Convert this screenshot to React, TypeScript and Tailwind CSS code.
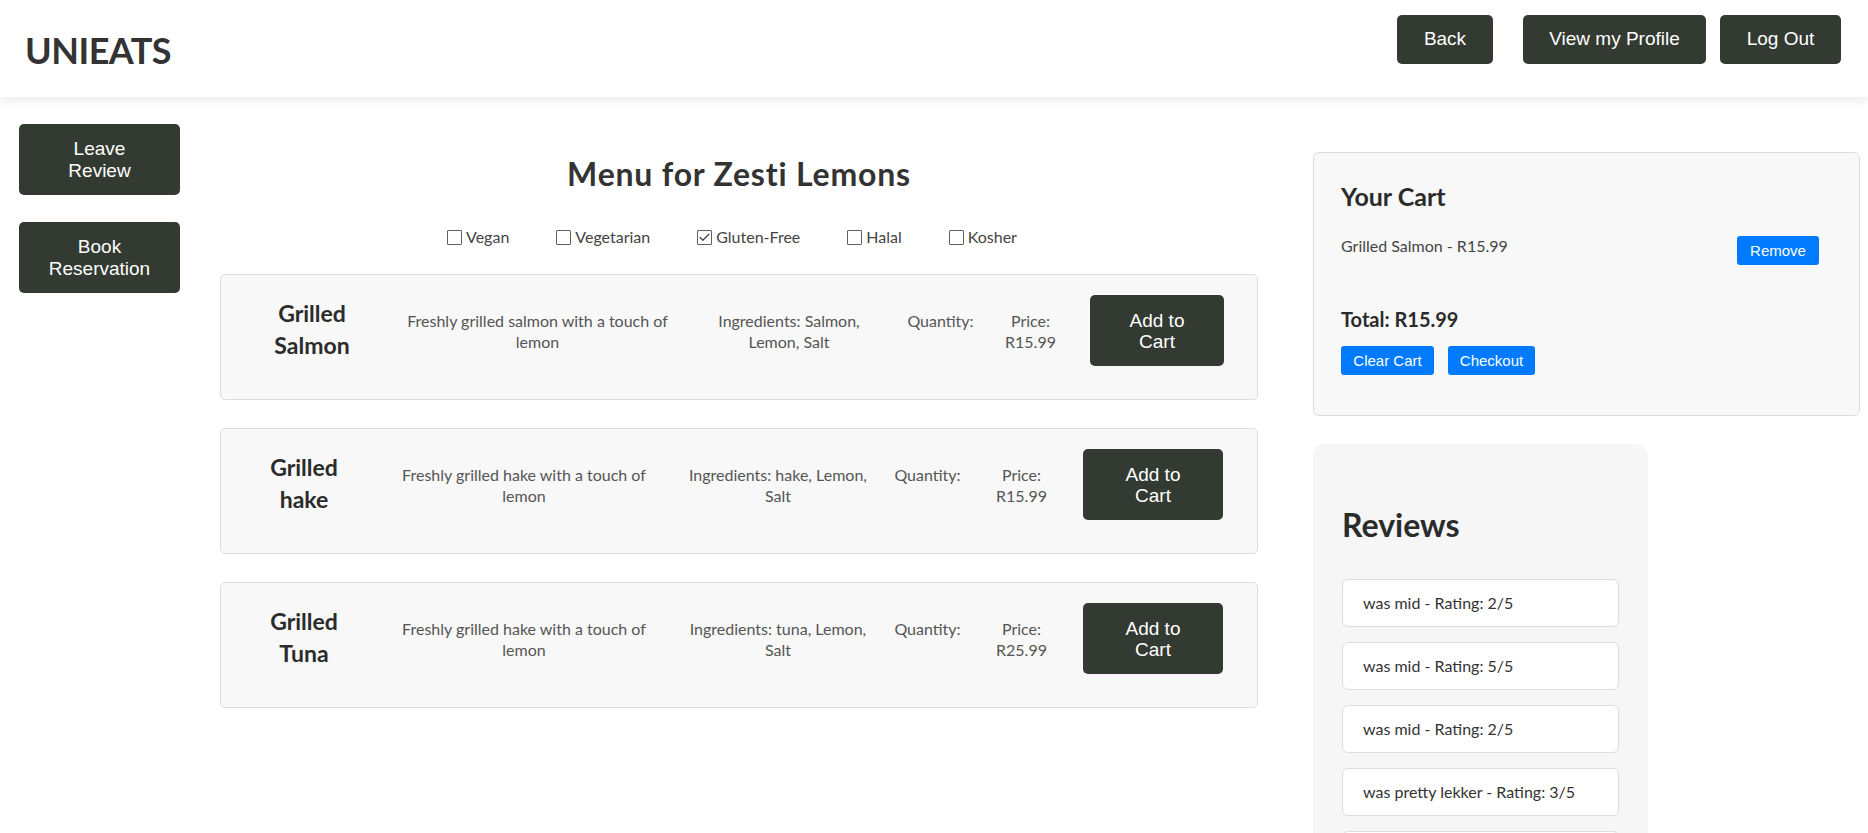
import { Check } from 'lucide-react';

type Dish = {
  title: string[];
  desc: string[];
  ingredients: string[];
  price: string;
  cols: string;
  btnWidth: string;
};

const dishes: Dish[] = [
  {
    title: ['Grilled', 'Salmon'],
    desc: ['Freshly grilled salmon with a touch of', 'lemon'],
    ingredients: ['Ingredients: Salmon,', 'Lemon, Salt'],
    price: 'R15.99',
    cols: 'grid-cols-[132px_319px_184px_119px_61px_163px]',
    btnWidth: 'w-[134px]',
  },
  {
    title: ['Grilled', 'hake'],
    desc: ['Freshly grilled hake with a touch of', 'lemon'],
    ingredients: ['Ingredients: hake, Lemon,', 'Salt'],
    price: 'R15.99',
    cols: 'grid-cols-[116px_324px_184px_115px_73px_165px]',
    btnWidth: 'w-[140px]',
  },
  {
    title: ['Grilled', 'Tuna'],
    desc: ['Freshly grilled hake with a touch of', 'lemon'],
    ingredients: ['Ingredients: tuna, Lemon,', 'Salt'],
    price: 'R25.99',
    cols: 'grid-cols-[116px_324px_184px_115px_73px_165px]',
    btnWidth: 'w-[140px]',
  },
];

const filters = [
  { label: 'Vegan', checked: false },
  { label: 'Vegetarian', checked: false },
  { label: 'Gluten-Free', checked: true },
  { label: 'Halal', checked: false },
  { label: 'Kosher', checked: false },
];

const reviews = [
  'was mid - Rating: 2/5',
  'was mid - Rating: 5/5',
  'was mid - Rating: 2/5',
  'was pretty lekker - Rating: 3/5',
  'was mid - Rating: 4/5',
  'was mid - Rating: 3/5',
];

const darkBtn =
  "bg-[#333a32] text-white rounded-[5px] font-['Liberation_Sans',Arial,sans-serif] text-[19px]";
const blueBtn =
  "bg-[#007bff] text-white rounded-[3px] font-['Liberation_Sans',Arial,sans-serif] text-[15px] h-[29px] leading-[29px]";

function Lines({ lines }: { lines: string[] }) {
  return (
    <div className="flex flex-col items-center text-center whitespace-nowrap">
      {lines.map((l, i) => (
        <span key={i}>{l}</span>
      ))}
    </div>
  );
}

function DishCard({ dish }: { dish: Dish }) {
  return (
    <div className="border border-[#dddddd] rounded-[5px] bg-[#f8f8f8] pt-[20px] pb-[33px] pl-[25px]">
      <div className={`grid ${dish.cols} items-center`}>
        <div className="flex flex-col items-center text-[23px] leading-[32px] font-bold text-[#2b2b2b] -mt-[4px]">
          {dish.title.map((t, i) => (
            <span key={i}>{t}</span>
          ))}
        </div>
        <div className="text-[16px] leading-[21px] text-[#555]">
          <Lines lines={dish.desc} />
        </div>
        <div className="text-[16px] leading-[21px] text-[#555]">
          <Lines lines={dish.ingredients} />
        </div>
        <div className="text-[16px] leading-[21px] text-[#555]">
          <Lines lines={['Quantity:', '\u00a0']} />
        </div>
        <div className="text-[16px] leading-[21px] text-[#555]">
          <Lines lines={['Price:', dish.price]} />
        </div>
        <div className="flex justify-end">
          <button className={`${darkBtn} ${dish.btnWidth} h-[71px] leading-[21px]`}>
            Add to
            <br />
            Cart
          </button>
        </div>
      </div>
    </div>
  );
}

export default function App() {
  return (
    <div className="min-h-screen bg-white font-['Lato','Noto_Sans',sans-serif] text-[#333]">
      {/* Top bar */}
      <header className="relative z-10 h-[97px] flex justify-between pl-[25px] pr-[27px] bg-white shadow-[0_3px_10px_rgba(0,0,0,0.09)]">
        <h1 className="self-center text-[36px] leading-[46px] font-bold text-[#333] tracking-[-0.5px] mt-[2px]">UNIEATS</h1>
        <div className="flex self-start mt-[15px]">
          <button className={`${darkBtn} w-[96px] h-[49px] mr-[30px]`}>Back</button>
          <button className={`${darkBtn} w-[183px] h-[49px] mr-[14px]`}>View my Profile</button>
          <button className={`${darkBtn} w-[121px] h-[49px]`}>Log Out</button>
        </div>
      </header>

      <div className="flex">
        {/* Left actions */}
        <aside className="ml-[19px] w-[161px] pt-[27px] flex flex-col gap-[27px]">
          <button className={`${darkBtn} h-[71px] leading-[22px]`}>
            Leave
            <br />
            Review
          </button>
          <button className={`${darkBtn} h-[71px] leading-[22px]`}>
            Book
            <br />
            Reservation
          </button>
        </aside>

        {/* Menu */}
        <main className="ml-[40px] w-[1038px] pt-[58px]">
          <h2 className="text-center text-[32px] leading-[38px] font-bold text-[#333] tracking-[0.8px]">Menu for Zesti Lemons</h2>
          <div className="mt-[34px] flex justify-center gap-[47px] pr-[14px] text-[16px] leading-[20px] text-[#444]">
            {filters.map(f => (
              <label key={f.label} className="flex items-center gap-[4px]">
                <span className="w-[15px] h-[15px] border-[1.5px] border-[#606060] rounded-[1px] bg-white flex items-center justify-center">
                  {f.checked && <Check size={13} strokeWidth={2.4} className="text-[#444]" />}
                </span>
                <span>{f.label}</span>
              </label>
            ))}
          </div>
          <div className="mt-[27px] flex flex-col gap-[28px]">
            {dishes.map((d, i) => (
              <DishCard key={i} dish={d} />
            ))}
          </div>
        </main>

        {/* Cart + reviews */}
        <div className="ml-[55px] w-[547px] pt-[55px]">
          <div className="border border-[#dddddd] rounded-[6px] bg-[#f8f8f8] pt-[28px] pl-[27px] pr-[27px] pb-[40px]">
            <h3 className="text-[25px] leading-[30px] font-bold text-[#2b2b2b]">Your Cart</h3>
            <div className="mt-[25px] flex justify-between items-start">
              <span className="text-[16px] leading-[20px] text-[#444]">Grilled Salmon - R15.99</span>
              <button className={`${blueBtn} w-[82px] mr-[13px]`}>Remove</button>
            </div>
            <p className="mt-[42px] text-[20px] leading-[24px] font-bold text-[#2b2b2b]">Total: R15.99</p>
            <div className="mt-[15px] flex gap-[14px]">
              <button className={`${blueBtn} w-[93px]`}>Clear Cart</button>
              <button className={`${blueBtn} w-[87px]`}>Checkout</button>
            </div>
          </div>

          <div className="mt-[28px] w-[335px] rounded-[12px] bg-[#f6f6f6] pt-[62px] pl-[29px] pb-[30px]">
            <h3 className="text-[32px] leading-[38px] font-bold text-[#2b2b2b]">Reviews</h3>
            <ul className="mt-[35px] flex flex-col gap-[15px]">
              {reviews.map((r, i) => (
                <li
                  key={i}
                  className="w-[277px] h-[48px] flex items-center pl-[20px] bg-white border border-[#dddddd] rounded-[6px] text-[16px] leading-[20px] text-[#333]"
                >
                  {r}
                </li>
              ))}
            </ul>
          </div>
        </div>
      </div>
    </div>
  );
}
